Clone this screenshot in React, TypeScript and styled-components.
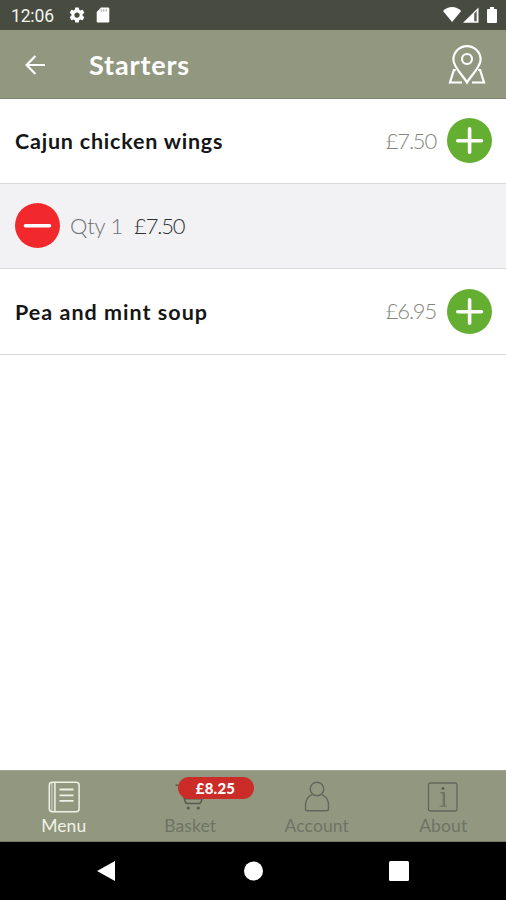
import React from "react";
import styled, { createGlobalStyle } from "styled-components";

const GlobalStyle = createGlobalStyle`
  * { box-sizing: border-box; }
  body { margin: 0; background: #fff; font-family: Lato, "Open Sans", sans-serif; }
  svg { display: block; flex: none; overflow: visible; }
`;

const Screen = styled.div`
  width: 506px;
  height: 900px;
  display: flex;
  flex-direction: column;
  background: #fff;
  overflow: hidden;
`;

const StatusBar = styled.div`
  height: 30px;
  flex: none;
  background: #484b3f;
  display: flex;
  align-items: center;
  justify-content: space-between;
  padding: 0 7px 0 11px;
`;

const StatusGroup = styled.div`
  display: flex;
  align-items: center;
  gap: 10px;
`;

const Clock = styled.span`
  width: 47px;
  font: 400 17.5px/20px Roboto, sans-serif;
  letter-spacing: -0.15px;
  color: #f3f4f0;
  margin-top: 2px;
`;

const Header = styled.header`
  height: 69px;
  flex: none;
  background: #929880;
  border-bottom: 1px solid #81866f;
  display: flex;
  align-items: center;
  padding: 1px 20px 0 25px;
`;

const IconButton = styled.button`
  border: 0;
  padding: 0;
  background: none;
  color: #fff;
`;

const Title = styled.h1`
  flex: 1;
  margin: 0 0 0 44px;
  font-size: 27px;
  line-height: 34px;
  font-weight: 700;
  letter-spacing: 0.85px;
  color: #fff;
`;

const List = styled.main`
  flex: 1;
`;

const Row = styled.div<{ $shaded?: boolean; $height: number }>`
  height: ${(p) => p.$height}px;
  display: flex;
  align-items: center;
  padding: 0 14px 1px 15px;
  background: ${(p) => (p.$shaded ? "#f2f2f4" : "#fff")};
  border-bottom: 1px solid #d9d9db;
`;

const ItemName = styled.span<{ $spacing: number }>`
  flex: 1;
  padding-top: 1px;
  font-size: 21.5px;
  line-height: 28px;
  font-weight: 700;
  letter-spacing: ${(p) => p.$spacing}px;
  color: #161616;
`;

const Price = styled.span<{ $dark?: boolean }>`
  font-size: 22px;
  line-height: 28px;
  font-weight: 300;
  letter-spacing: -1.2px;
  color: ${(p) => (p.$dark ? "#303032" : "#85857c")};
  margin: 0 11px 0 10px;
`;

const Quantity = styled.span`
  font-size: 22px;
  line-height: 28px;
  font-weight: 300;
  letter-spacing: -0.2px;
  color: #707074;
  margin: 0 1px 0 10px;
`;

const RoundButton = styled.button<{ $color: string }>`
  width: 45px;
  height: 45px;
  flex: none;
  border: 0;
  padding: 0;
  border-radius: 50%;
  color: #fff;
  background: ${(p) => p.$color};
`;

const TabBar = styled.nav`
  height: 72px;
  flex: none;
  display: grid;
  grid-template-columns: repeat(4, 1fr);
  background: #929880;
  border-top: 1px solid #a1a594;
  border-bottom: 1px solid #777c68;
`;

const Tab = styled.div<{ $active?: boolean }>`
  position: relative;
  display: flex;
  flex-direction: column;
  align-items: center;
  padding: 10px 0 0 1px;
  color: ${(p) => (p.$active ? "#eff1e7" : "#6f7365")};
`;

const TabLabel = styled.span<{ $spacing: number }>`
  margin-top: 3px;
  font-size: 17.5px;
  line-height: 20px;
  letter-spacing: ${(p) => p.$spacing}px;
`;

const Badge = styled.span`
  position: absolute;
  left: 51px;
  top: 6px;
  width: 76px;
  height: 22px;
  border-radius: 11px;
  background: #cc2c27;
  color: #fff;
  font-size: 15px;
  line-height: 22px;
  font-weight: 900;
  letter-spacing: 0.2px;
  text-align: center;
  z-index: 1;
`;

const SystemNav = styled.div`
  height: 58px;
  flex: none;
  display: flex;
  align-items: center;
  justify-content: space-between;
  padding: 0 97px 0 96px;
  background: #000;
`;

const Gear = () => (
  <svg width="18" height="18" viewBox="0 0 24 24" fill="#fff">
    <path d="M19.43 12.98c.04-.32.07-.64.07-.98s-.03-.66-.07-.98l2.11-1.65c.19-.15.24-.42.12-.64l-2-3.46c-.12-.22-.39-.3-.61-.22l-2.49 1c-.52-.4-1.08-.73-1.69-.98l-.38-2.65A.49.49 0 0 0 14 2h-4c-.25 0-.46.18-.49.42l-.38 2.65c-.61.25-1.17.59-1.69.98l-2.49-1c-.23-.09-.49 0-.61.22l-2 3.46c-.13.22-.07.49.12.64l2.11 1.65c-.04.32-.07.65-.07.98s.03.66.07.98l-2.11 1.65c-.19.15-.24.42-.12.64l2 3.46c.12.22.39.3.61.22l2.49-1c.52.4 1.08.73 1.69.98l.38 2.65c.03.24.24.42.49.42h4c.25 0 .46-.18.49-.42l.38-2.65c.61-.25 1.17-.59 1.69-.98l2.49 1c.23.09.49 0 .61-.22l2-3.46c.12-.22.07-.49-.12-.64l-2.11-1.65zM12 15.5a3.5 3.5 0 1 1 0-7 3.5 3.5 0 0 1 0 7z" />
  </svg>
);

const SdCard = () => (
  <svg width="14" height="16" viewBox="0 0 14 16">
    <path d="M5 .5h7q1.3 0 1.3 1.3v12.4q0 1.3-1.3 1.3H2q-1.3 0-1.3-1.3V5z" fill="#fff" />
    <path d="M5.2 2.2v2.3M7.7 2.2v2.3M10.2 2.2v2.3" stroke="#a3a59d" strokeWidth="1.2" />
  </svg>
);

const StatusIcons = () => (
  <svg width="56" height="18" viewBox="0 0 56 18" fill="#fff">
    <path d="M0 4.9C5.2-.2 13-.2 18.2 4.9L9.1 16z" />
    <path d="M20 16.8 35.5 1.5v15.3z" />
    <path d="M31.2 7.5v7.7h2.5V5" fill="#5d6054" />
    <path d="M45 3h2V1h4v2h2q1 0 1 1v12q0 1-1 1h-8q-1 0-1-1V4q0-1 1-1z" />
  </svg>
);

const BackArrow = () => (
  <svg width="20" height="20" viewBox="0 0 20 20" fill="none" stroke="currentColor" strokeWidth="2.2">
    <path d="M20 10H2M10.4 1 1.6 10l8.8 9" />
  </svg>
);

const MapPin = () => (
  <svg width="38" height="40" viewBox="0 0 38 40" fill="none" stroke="currentColor" strokeWidth="2.2">
    <path d="M19 37.5C15 30.5 5.4 22 5.4 14.7a13.6 13.6 0 0 1 27.2 0C32.6 22 23 30.5 19 37.5z" />
    <circle cx="19" cy="14" r="5" />
    <path d="M7.8 25H5.9L2 37.5h12M30.2 25h1.9L36 37.5H24" />
  </svg>
);

const Sign = ({ plus }: { plus?: boolean }) => (
  <svg width="45" height="45" viewBox="0 0 45 45" fill="none" stroke="currentColor" strokeWidth="3.6" strokeLinecap="round">
    <path d={plus ? "M10.8 22.7h23.6M22.6 10.9v23.4" : "M10.5 22.7h24"} />
  </svg>
);

const MenuIcon = () => (
  <svg width="32" height="32" viewBox="0 0 32 32" fill="none" stroke="currentColor" strokeWidth="1.5">
    <rect x="1.3" y="1.2" width="29.8" height="29.6" rx="3" />
    <path d="M3.9 1v30" opacity=".5" />
    <path d="M6.9 1v30" />
    <path d="M11.5 8.5h14M11.5 14.3h14M11.5 19.9h14" strokeWidth="1.8" />
  </svg>
);

const CartIcon = () => (
  <svg width="32" height="32" viewBox="0 0 32 32" fill="none" stroke="#565a4f" strokeWidth="1.5">
    <path d="M1.5 4.2h5l4.5 16q.7 2.3 2.6 2.3h11.2q1.8 0 2.5-2.3L30 9.5H8.5M10.2 17.8h18" />
    <circle cx="14.2" cy="27" r="1.6" fill="#565a4f" stroke="none" />
    <circle cx="24.2" cy="27" r="1.6" fill="#565a4f" stroke="none" />
  </svg>
);

const AccountIcon = () => (
  <svg width="32" height="32" viewBox="0 0 32 32" fill="none" stroke="#62665a" strokeWidth="1.4">
    <circle cx="16" cy="8" r="6.8" />
    <path d="M11.3 13.6C7 15.2 4.5 19.5 4.5 24.5v3.2q0 2 2 2h19q2 0 2-2v-3.2c0-5-2.5-9.3-6.8-10.9" />
  </svg>
);

const InfoIcon = () => (
  <svg width="32" height="32" viewBox="0 0 32 32" fill="none" stroke="#62665a" strokeWidth="1.3">
    <rect x="1.5" y="2" width="28.5" height="28" rx="1.8" />
    <path d="M13 11.8h3.2v13M12.6 25.2h7.2M17.6 11.8v13M15 11.8h2.6" strokeWidth="0.9" />
    <circle cx="16" cy="7.5" r="1.3" fill="#50534a" stroke="none" />
  </svg>
);

const TABS = [
  { label: "Menu", icon: <MenuIcon />, spacing: 0.1, active: true },
  { label: "Basket", icon: <CartIcon />, spacing: 0.1, badge: "£8.25" },
  { label: "Account", icon: <AccountIcon />, spacing: 0.1 },
  { label: "About", icon: <InfoIcon />, spacing: 0.1 },
];

export default function App() {
  return (
    <Screen>
      <GlobalStyle />
      <StatusBar>
        <StatusGroup>
          <Clock>12:06</Clock>
          <Gear />
          <SdCard />
        </StatusGroup>
        <StatusIcons />
      </StatusBar>
      <Header>
        <IconButton aria-label="Back"><BackArrow /></IconButton>
        <Title>Starters</Title>
        <IconButton aria-label="Find us"><MapPin /></IconButton>
      </Header>
      <List>
        <Row $height={85}>
          <ItemName $spacing={0.78}>Cajun chicken wings</ItemName>
          <Price>£7.50</Price>
          <RoundButton $color="#64ae31" aria-label="Add"><Sign plus /></RoundButton>
        </Row>
        <Row $height={85} $shaded>
          <RoundButton $color="#f1292d" aria-label="Remove"><Sign /></RoundButton>
          <Quantity>Qty 1</Quantity>
          <Price $dark>£7.50</Price>
        </Row>
        <Row $height={86}>
          <ItemName $spacing={1.02}>Pea and mint soup</ItemName>
          <Price>£6.95</Price>
          <RoundButton $color="#64ae31" aria-label="Add"><Sign plus /></RoundButton>
        </Row>
      </List>
      <TabBar>
        {TABS.map((t) => (
          <Tab key={t.label} $active={t.active}>
            {t.icon}
            {t.badge && <Badge>{t.badge}</Badge>}
            <TabLabel $spacing={t.spacing}>{t.label}</TabLabel>
          </Tab>
        ))}
      </TabBar>
      <SystemNav>
        <svg width="20" height="22" viewBox="0 0 20 22"><path d="M1 11 19 1v20z" fill="#fff" /></svg>
        <svg width="20" height="20" viewBox="0 0 20 20"><circle cx="10.5" cy="10" r="9.5" fill="#fff" /></svg>
        <svg width="20" height="20" viewBox="0 0 20 20"><rect width="20" height="20" rx="1.5" fill="#fff" /></svg>
      </SystemNav>
    </Screen>
  );
}
